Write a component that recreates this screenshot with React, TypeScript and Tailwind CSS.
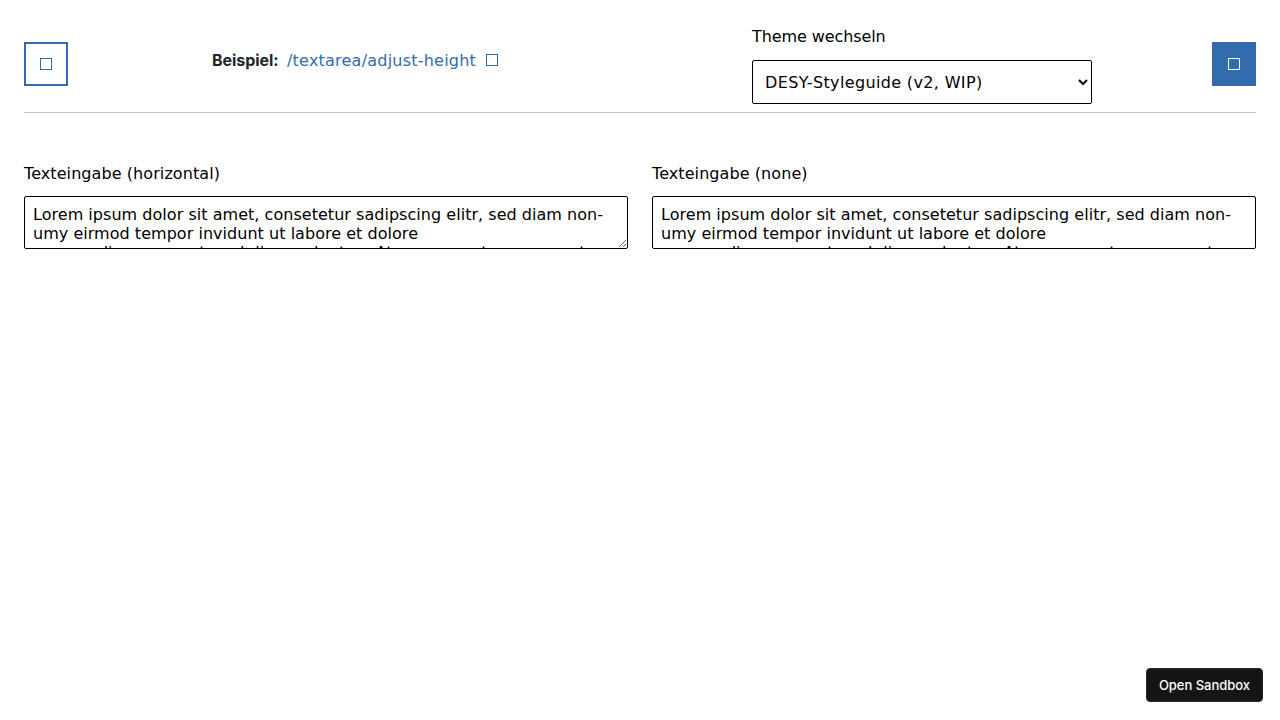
import React from "react";

const lorem = [
  "Lorem ipsum dolor sit amet, consetetur sadipscing elitr, sed diam non-",
  "umy eirmod tempor invidunt ut labore et dolore",
  "magna aliquyam erat, sed diam voluptua. At vero eos et accusam et",
  "justo duo dolores et ea rebum.",
].join("\n");

function TextField({ label, className }: { label: string; className: string }) {
  return (
    <label className="flex min-w-0 flex-1 flex-col">
      <span className="mb-2.5 h-6 pt-px leading-6 tracking-[0.08px]">{label}</span>
      <textarea
        defaultValue={lorem}
        className={`mt-px block h-[53px] w-full overflow-hidden rounded-[2px] border border-black bg-white px-2 py-2 leading-[19px] tracking-[0.035px] text-black outline-none ${className}`}
      />
    </label>
  );
}

export default function App() {
  return (
    <div className="flex h-[720px] flex-col bg-white px-6 font-['DejaVu_Sans',sans-serif] text-[16px] text-black">
      <header className="flex h-[113px] shrink-0 border-b border-[#c4c4c4] pt-6">
        <button className="mt-[18px] flex size-11 items-center justify-center border-2 border-[#326cae]">
          <span className="size-3 border border-[#326cae]" />
        </button>
        <div className="ml-36 mt-6 flex h-6 w-[540px] items-center">
          <strong className="w-[75px] font-['Inter',sans-serif] font-bold leading-6 tracking-[-0.05px] text-[#212529]">Beispiel:</strong>
          <a className="flex items-center leading-6 text-[#326cae]">
            <span className="w-[199px] pt-px tracking-[0.22px]">/textarea/adjust-height</span>
            <span className="h-3 w-[12px] border border-[#326cae]" />
          </a>
        </div>
        <label className="flex w-[340px] flex-col">
          <span className="mb-3 h-6 pt-px leading-6 tracking-[-0.09px]">Theme wechseln</span>
          <select className="h-11 w-full rounded-[2px] border border-black bg-white px-2 tracking-[0.35px] text-black">
            <option>DESY-Styleguide (v2, WIP)</option>
          </select>
        </label>
        <button className="ml-auto mt-[18px] flex size-11 items-center justify-center bg-[#326cae]">
          <span className="size-3 border border-white" />
        </button>
      </header>
      <main className="mt-12 flex gap-6">
        <TextField label="Texteingabe (horizontal)" className="resize-x" />
        <TextField label="Texteingabe (none)" className="resize-none" />
      </main>
      <button className="-mr-[7px] mb-[18px] mt-auto h-[34px] w-[117px] self-end rounded-[4px] border border-[#2a2a2a] bg-[#151515] pt-0.5 font-['Inter',sans-serif] text-[13px] font-medium tracking-[-0.02px] text-white">
        Open Sandbox
      </button>
    </div>
  );
}
